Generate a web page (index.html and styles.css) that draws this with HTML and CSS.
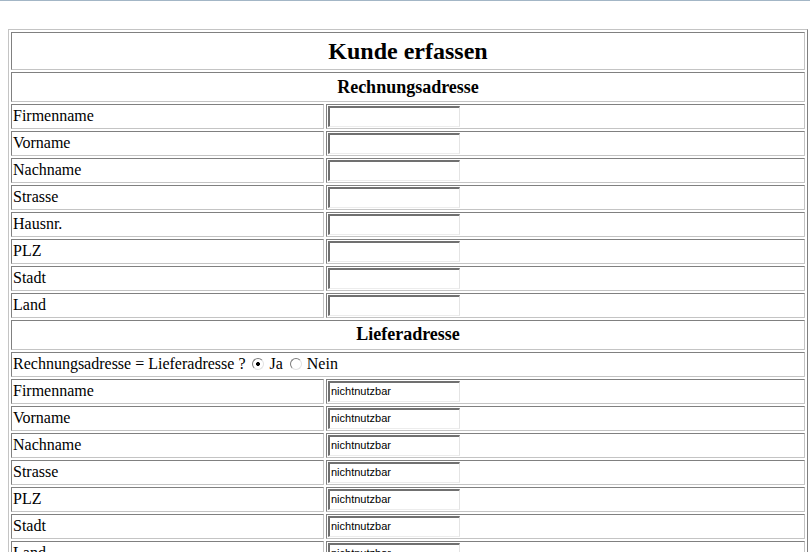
FILE: index.html
```html
<!DOCTYPE html>
<html>
<head>
<meta charset="utf-8">
<link rel="stylesheet" href="styles.css">
</head>
<body>
<div class="topline"></div>
<div class="page">
<table class="form">
  <colgroup><col class="col-label"><col class="col-field"></colgroup>
  <tr><td colspan="2" class="title">Kunde erfassen</td></tr>
  <tr><td colspan="2" class="section">Rechnungsadresse</td></tr>
  <tr><td class="label">Firmenname</td><td class="field"><input class="txt" type="text"></td></tr>
  <tr><td class="label">Vorname</td><td class="field"><input class="txt" type="text"></td></tr>
  <tr><td class="label">Nachname</td><td class="field"><input class="txt" type="text"></td></tr>
  <tr><td class="label">Strasse</td><td class="field"><input class="txt" type="text"></td></tr>
  <tr><td class="label">Hausnr.</td><td class="field"><input class="txt" type="text"></td></tr>
  <tr><td class="label">PLZ</td><td class="field"><input class="txt" type="text"></td></tr>
  <tr><td class="label">Stadt</td><td class="field"><input class="txt" type="text"></td></tr>
  <tr><td class="label">Land</td><td class="field"><input class="txt" type="text"></td></tr>
  <tr><td colspan="2" class="section sub">Lieferadresse</td></tr>
  <tr><td colspan="2" class="label">Rechnungsadresse = Lieferadresse ? <input class="radio" type="radio" name="same" checked> Ja <input class="radio" type="radio" name="same"> Nein</td></tr>
  <tr><td class="label">Firmenname</td><td class="field"><input class="txt" type="text" value="nichtnutzbar"></td></tr>
  <tr><td class="label">Vorname</td><td class="field"><input class="txt" type="text" value="nichtnutzbar"></td></tr>
  <tr><td class="label">Nachname</td><td class="field"><input class="txt" type="text" value="nichtnutzbar"></td></tr>
  <tr><td class="label">Strasse</td><td class="field"><input class="txt" type="text" value="nichtnutzbar"></td></tr>
  <tr><td class="label">PLZ</td><td class="field"><input class="txt" type="text" value="nichtnutzbar"></td></tr>
  <tr><td class="label">Stadt</td><td class="field"><input class="txt" type="text" value="nichtnutzbar"></td></tr>
  <tr><td class="label">Land</td><td class="field"><input class="txt" type="text" value="nichtnutzbar"></td></tr>
</table>
</div>
</body>
</html>
```
FILE: styles.css
```css
html, body {
  margin: 0;
  padding: 0;
  background: #ffffff;
}
body {
  font-family: "Liberation Serif", "Times New Roman", serif;
  font-size: 16px;
  color: #000;
}
.topline {
  height: 1px;
  background: #a3b6c6;
}
.page {
  padding: 28px 0 0 8px;
}
.form {
  width: 800px;
  border-collapse: separate;
  border-spacing: 2px;
  border-style: solid;
  border-width: 1px;
  border-color: #c4c4c4 #808080 #808080 #c4c4c4;
  table-layout: fixed;
}
.col-label {
  width: 313px;
}
.form td {
  padding: 1px;
  border-style: solid;
  border-width: 1px;
  border-color: #808080 #c4c4c4 #c4c4c4 #808080;
  vertical-align: middle;
}
.title {
  text-align: center;
  font-weight: bold;
  font-size: 24px;
  line-height: 34px;
}
.section {
  text-align: center;
  font-weight: bold;
  font-size: 18px;
  line-height: 26px;
}
.form td.sub {
  line-height: 24px;
  padding-bottom: 3px;
}
.label {
  line-height: 20px;
  padding-bottom: 2px !important;
  white-space: nowrap;
}
.field {
  line-height: 21px;
}
.txt {
  display: block;
  box-sizing: border-box;
  width: 132px;
  height: 21px;
  margin: 0;
  padding: 0 0 2px 1px;
  border-style: solid;
  border-width: 2px 1px 1px 2px;
  border-color: #707070 #e4e4e4 #ececec #707070;
  background: #fff;
  font-family: "Liberation Sans", Arial, sans-serif;
  font-size: 11px;
  color: #000;
  outline: none;
}
.radio {
  -webkit-appearance: none;
  appearance: none;
  box-sizing: border-box;
  width: 12px;
  height: 12px;
  margin: 0 1px 0 3px;
  vertical-align: -1px;
  border-radius: 50%;
  border-style: solid;
  border-width: 1px;
  border-color: #7a7a7a #e2e2e2 #e2e2e2 #7a7a7a;
  background: #fff;
}
.radio:checked {
  background: radial-gradient(circle, #000 0 1.8px, #fff 2.2px);
}
```
